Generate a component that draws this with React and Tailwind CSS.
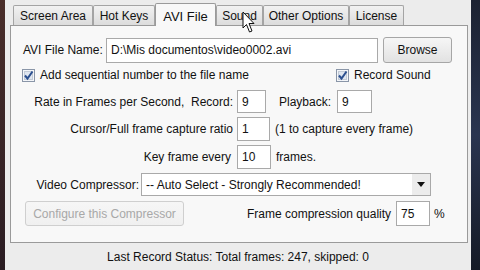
import React from "react";

const font = { fontFamily: '"Liberation Sans", Arial, sans-serif' };

function Tab({ label, w, active }) {
  if (active) {
    return (
      <div
        className={`relative z-10 -mb-px flex h-[23px] items-start justify-center self-end rounded-t-[2px] border border-b-0 border-[#9a9a9a] bg-[#f8f8f8] pt-[3px] text-[13px] text-[#111] ${w}`}
      >
        {label}
      </div>
    );
  }
  return (
    <div
      className={`flex h-[20px] items-center justify-center self-end rounded-t-[2px] border border-b-0 border-[#a4a4a4] bg-gradient-to-b from-[#f2f2f2] to-[#dcdcdc] text-[12px] text-[#111] ${w}`}
    >
      {label}
    </div>
  );
}

function Input({ value, w, h = "h-[23px]" }) {
  return (
    <div
      className={`flex items-center border border-[#a9a9a9] bg-white pl-[4px] text-[12px] text-[#111] ${w} ${h}`}
    >
      {value}
    </div>
  );
}

function Check({ label }) {
  return (
    <div className="flex items-center gap-[5px]">
      <svg width="13" height="13" viewBox="0 0 13 13">
        <rect x="0.5" y="0.5" width="12" height="12" fill="#f4f6f9" stroke="#8a96a8" />
        <rect x="2.5" y="2.5" width="8" height="8" fill="#dfe6f0" stroke="#c2cad6" />
        <path d="M3 6.5 L5.5 9.5 L10.5 2.5" fill="none" stroke="#2b4f8f" strokeWidth="2" />
      </svg>
      <span>{label}</span>
    </div>
  );
}

function Button({ children, w, h, disabled }) {
  return (
    <div
      className={`flex items-center justify-center rounded-[3px] border border-[#a6a6a6] bg-gradient-to-b from-[#f6f6f6] to-[#e2e2e2] text-[12px] ${
        disabled ? "border-[#cfcfcf] from-[#f4f4f4] to-[#f0f0f0] text-[#a8a8a8]" : "text-[#111]"
      } ${w} ${h}`}
    >
      {children}
    </div>
  );
}

export default function App() {
  return (
    <div className="flex h-[270px] w-[480px] overflow-hidden text-[12px] text-[#111]" style={font}>
      <div className="w-[5px] bg-gradient-to-b from-[#4a2e2a] to-[#2a1c22]" />
      <div className="relative flex flex-1 flex-col bg-[#ececec]">
        <div className="flex h-[25px] items-end pl-[8px]">
          <Tab label="Screen Area" w="w-[80px]" />
          <Tab label="Hot Keys" w="w-[62px]" />
          <Tab label="AVI File" w="w-[61px]" active />
          <Tab label="Sound" w="w-[47px]" />
          <Tab label="Other Options" w="w-[86px]" />
          <Tab label="License" w="w-[55px]" />
        </div>

        <div className="ml-[5px] flex h-[218px] w-[458px] flex-col border border-[#9a9a9a] bg-[#f8f8f8]">
          <div className="mt-[11px] flex h-[26px] items-center">
            <span className="ml-[12px] w-[83px]">AVI File Name:</span>
            <Input value="D:\Mis documentos\video0002.avi" w="w-[272px]" h="h-[25px]" />
            <div className="ml-[5px]">
              <Button w="w-[69px]" h="h-[26px]">Browse</Button>
            </div>
          </div>

          <div className="mt-[5px] flex h-[14px] items-center">
            <div className="ml-[11px] w-[314px]">
              <Check label="Add sequential number to the file name" />
            </div>
            <Check label="Record Sound" />
          </div>

          <div className="mt-[8px] flex h-[23px] items-center">
            <span className="w-[222px] text-right">Rate in Frames per Second,&nbsp; Record:</span>
            <div className="ml-[4px]">
              <Input value="9" w="w-[29px]" />
            </div>
            <span className="ml-[13px]">Playback:</span>
            <div className="ml-[6px]">
              <Input value="9" w="w-[35px]" />
            </div>
          </div>

          <div className="mt-[4px] flex h-[24px] items-center">
            <span className="w-[222px] text-right">Cursor/Full frame capture ratio</span>
            <div className="ml-[4px]">
              <Input value="1" w="w-[33px]" h="h-[24px]" />
            </div>
            <span className="ml-[5px]">(1 to capture every frame)</span>
          </div>

          <div className="mt-[4px] flex h-[24px] items-center">
            <span className="w-[220px] text-right">Key frame every</span>
            <div className="ml-[6px]">
              <Input value="10" w="w-[34px]" h="h-[24px]" />
            </div>
            <span className="ml-[5px]">frames.</span>
          </div>

          <div className="mt-[4px] flex h-[23px] items-center">
            <span className="w-[128px] text-right">Video Compressor:</span>
            <div className="ml-[2px] flex h-[23px] w-[290px] items-center border border-[#a9a9a9] bg-white">
              <span className="flex-1 pl-[4px]">-- Auto Select - Strongly Recommended!</span>
              <div className="flex h-full w-[18px] items-center justify-center bg-[#ececec]">
                <svg width="8" height="5" viewBox="0 0 8 5">
                  <path d="M0 0 H8 L4 5 Z" fill="#111" />
                </svg>
              </div>
            </div>
          </div>

          <div className="mt-[5px] flex h-[25px] items-center">
            <div className="ml-[14px]">
              <Button w="w-[159px]" h="h-[25px]" disabled>
                Configure this Compressor
              </Button>
            </div>
            <span className="ml-[63px]">Frame compression quality</span>
            <div className="ml-[5px]">
              <Input value="75" w="w-[34px]" h="h-[25px]" />
            </div>
            <span className="ml-[4px]">%</span>
          </div>
        </div>

        <div className="flex flex-1 items-center justify-center text-[12px]">
          Last Record Status: Total frames: 247, skipped: 0
        </div>

        <svg
          className="absolute left-[237px] top-[11px]"
          width="14"
          height="23"
          viewBox="0 0 14 23"
        >
          <path
            d="M1 1 L1 17 L4.5 13.5 L7.5 21 L10 20 L7 12.5 L12 12.5 Z"
            fill="#fff"
            stroke="#111"
            strokeWidth="1"
            strokeLinejoin="round"
          />
        </svg>
      </div>
      <div className="w-[9px] bg-gradient-to-b from-[#1c2232] via-[#2a3550] to-[#151a26]" />
    </div>
  );
}
